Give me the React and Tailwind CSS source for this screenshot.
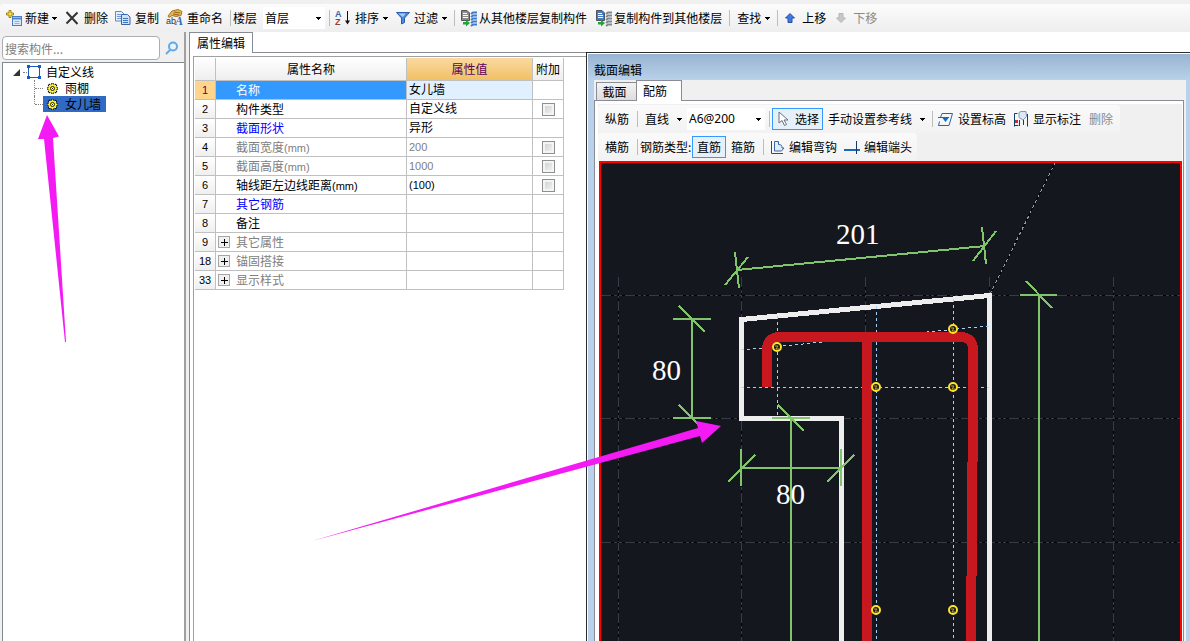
import { useState } from "react"

const properties = [
  { no: 1, name: "名称", value: "女儿墙" },
  { no: 2, name: "构件类型", value: "自定义线", check: true },
  { no: 3, name: "截面形状", value: "异形", tone: "blue" },
  { no: 4, name: "截面宽度", unit: "(mm)", value: "200", tone: "gray", check: true },
  { no: 5, name: "截面高度", unit: "(mm)", value: "1000", tone: "gray", check: true },
  { no: 6, name: "轴线距左边线距离", unit: "(mm)", value: "(100)", check: true },
  { no: 7, name: "其它钢筋", value: "", tone: "blue" },
  { no: 8, name: "备注", value: "" },
  { no: 9, name: "其它属性", value: "", tone: "gray", group: true },
  { no: 18, name: "锚固搭接", value: "", tone: "gray", group: true },
  { no: 33, name: "显示样式", value: "", tone: "gray", group: true },
]

const tones = {
  blue: "text-[#0000ff]",
  gray: "text-[#808080]",
}

const rebars = [
  [777, 347],
  [953, 329],
  [876, 387],
  [953, 387],
  [876, 610],
  [953, 610],
]

const Sep = ({ className = "" }) => <span className={`h-4 w-px shrink-0 bg-[#bdbdbd] ${className}`} />

const Caret = ({ className = "" }) => (
  <svg className={`h-[3px] w-[5px] shrink-0 ${className}`} viewBox="0 0 5 3" shapeRendering="crispEdges">
    <path d="M0 0h5v1H4v1H3v1H2V2H1V1H0z" fill="#000" />
  </svg>
)

const ToolButton = ({ children, className = "" }) => (
  <button type="button" className={`flex h-[22px] shrink-0 items-center whitespace-nowrap ${className}`}>
    {children}
  </button>
)

const NewIcon = () => (
  <svg className="h-4 w-4" viewBox="0 0 16 16">
    <rect x="6.5" y="6.5" width="9" height="9" fill="#dbeafa" stroke="#4c7dbd" />
    <path d="M7 8.5h8" stroke="#4a86d8" strokeWidth="2" />
    <path d="M8.5 11.5h5M8.5 13.5h5" stroke="#8fb2dd" />
    <path d="M3 .5h2v2.500h2.500v2H5v2.500H3V5H.5V3H3z" fill="#ffe14d" stroke="#a1820d" />
  </svg>
)

const CrossIcon = () => (
  <svg className="h-[14px] w-[14px]" viewBox="0 0 14 14">
    <path d="M1.500 1l11 12M12.500 1.500l-11 11" stroke="#333" strokeWidth="2" fill="none" />
  </svg>
)

const CopyIcon = () => (
  <svg className="h-4 w-4" viewBox="0 0 16 16">
    <path d="M.5 1.500h6l2.500 2.500v7H.5z" fill="#e6f0fc" stroke="#5d8ac4" />
    <path d="M2 4.500h4M2 6.500h4M2 8.500h4" stroke="#6e9bd3" />
    <path d="M6.500 4.500h6l2.500 2.500v7.500H6.500z" fill="#cfe1f8" stroke="#3767ab" />
    <path d="M8 8.500h5M8 10.500h5M8 12.500h5" stroke="#3f77bf" />
  </svg>
)

const RenameIcon = () => (
  <svg className="h-[18px] w-[18px] overflow-visible" viewBox="0 0 18 18">
    <path d="M2 7l4-5 6-1.500 4 2-1 4-5 1-4-1-3 2z" fill="#e9b64a" stroke="#a2752a" />
    <path d="M8 3l6 1M7 5l6 1" stroke="#8f6420" />
    <text x="0" y="15" fontSize="9" fontFamily="Liberation Sans" fill="#333">ab</text>
    <text x="9" y="16" fontSize="12" fontStyle="italic" fontWeight="bold" fontFamily="Liberation Serif" fill="#3467b8">A</text>
  </svg>
)

const SortIcon = () => (
  <svg className="h-4 w-4 overflow-visible" viewBox="0 0 16 16">
    <text x="0" y="7" fontSize="9" fontWeight="bold" fontFamily="Liberation Sans" fill="#3b64a8">A</text>
    <text x="0" y="15" fontSize="9" fontWeight="bold" fontFamily="Liberation Sans" fill="#94403c">Z</text>
    <path d="M12.500 1v11" stroke="#111" />
    <path d="M10 10.500h5l-2.500 4z" fill="#111" />
  </svg>
)

const FilterIcon = () => (
  <svg className="h-[14px] w-[14px]" viewBox="0 0 14 14">
    <path d="M.5 1.500h13L8.500 7v4.500L5.500 13V7z" fill="#4b8ae4" stroke="#2a5db0" />
    <path d="M2.500 2.500h7L7 6z" fill="#a9cdf8" />
  </svg>
)

const FloorCopyIcon = ({ page, stack }) => (
  <svg className="h-[17px] w-[17px]" viewBox="0 0 17 17">
    <path d="M1.500.5H7L9.500 3v7.500h-8z" fill={page} stroke="#555" />
    <path d="M3 3.500h4M3 5.500h5M3 7.500h5" stroke="#fff" />
    <path d="M11 4l2-1.500h4M11 7l2-1.500h4M11 10l2-1.500h4M11 13l2-1.500h4M11 16l2-1.500h4" stroke={stack} strokeWidth="2" fill="none" />
    <path d="M3 12h3v-2l4 3-4 3.500v-2H3z" fill="#22a43a" />
  </svg>
)

const ArrowIcon = ({ down, fill, stroke }) => (
  <svg className={`h-[10px] w-[10px] ${down ? "rotate-180" : ""}`} viewBox="0 0 10 10">
    <path d="M5 .5l4.500 4.500H7v4.500H3V5H.5z" fill={fill} stroke={stroke} />
  </svg>
)

const SearchIcon = () => (
  <svg className="h-[14px] w-[14px]" viewBox="0 0 14 14">
    <path d="M5 9l-4 4" stroke="#6ba6dd" strokeWidth="2" />
    <circle cx="8" cy="5.500" r="4" fill="#e8f5fd" stroke="#5fa9e6" strokeWidth="2" />
  </svg>
)

const LineIcon = () => (
  <svg className="h-[14px] w-[14px]" viewBox="0 0 14 14" shapeRendering="crispEdges">
    <rect x="1.500" y="1.500" width="11" height="11" fill="#fff" stroke="#1a58c4" />
    <path d="M0 0h3v3H0zM11 0h3v3h-3zM0 11h3v3H0zM11 11h3v3h-3z" fill="#1a58c4" />
  </svg>
)

const GearIcon = () => (
  <svg className="h-[13px] w-[13px]" viewBox="0 0 13 13">
    <path
      d="M6.500 1v11M1 6.500h11M2.500 2.500l8 8M10.500 2.500l-8 8"
      stroke="#1c1c00"
      strokeWidth="2.500"
    />
    <circle cx="6.500" cy="6.500" r="4" fill="#ffee22" />
    <path d="M6.500 1.500v10M1.500 6.500h10M3 3l7 7M10 3l-7 7" stroke="#ffee22" />
    <circle cx="6.500" cy="6.500" r="2" fill="#fff9a0" stroke="#222" />
    <path d="M6 6h1v1H6z" fill="#222" />
  </svg>
)

const PlusBox = () => (
  <svg className="h-3 w-3" viewBox="0 0 12 12" shapeRendering="crispEdges">
    <rect x=".5" y=".5" width="11" height="11" fill="#f0f0f0" stroke="#a6a6a6" />
    <path d="M3 6.500h7M6.500 3v7" stroke="#000" />
  </svg>
)

const PointerIcon = () => (
  <svg className="h-4 w-[11px]" viewBox="0 0 11 16">
    <path d="M1 1v11l3-2.500 2.500 5 2-1-2.500-4.500h4z" fill="#fff" stroke="#6b6f78" />
  </svg>
)

const ElevationIcon = () => (
  <svg className="h-[15px] w-[15px]" viewBox="0 0 15 15">
    <path d="M2.500 5.500l1.500-4h10.500l-3.500 12H.5l1-4" fill="none" stroke="#1769c0" />
    <path d="M0 5.500h11" stroke="#1769c0" />
    <path d="M4.500 6h6l-3 4z" fill="#1769c0" />
  </svg>
)

const MarkIcon = () => (
  <svg className="h-4 w-[14px]" viewBox="0 0 14 16">
    <path d="M.5 15.500V2.500h3M13.500 3v12.500M.5 14.500h4M5.500 15V9M9.500 14V8" fill="none" stroke="#123d73" />
    <path d="M5 1.500L7 .5h5l.5 5-3.500 3.500L5 6.500z" fill="#dce8f6" stroke="#8199b8" />
    <rect x="1" y="9" width="3" height="3" fill="#d82e1f" />
  </svg>
)

const HookIcon = () => (
  <svg className="h-[15px] w-[15px]" viewBox="0 0 15 15">
    <path d="M1.500 1v12.500H13" fill="none" stroke="#1e4f96" />
    <path d="M4.500 1.500h4v3c3 0 3.500 1 3.500 3.500h2l-2.500 3h-7z" fill="#e2ecf8" stroke="#3a66a6" />
  </svg>
)

const EndIcon = () => (
  <svg className="h-[15px] w-4" viewBox="0 0 16 15">
    <path d="M0 10h16" stroke="#1769c0" strokeWidth="2" />
    <path d="M12.500 1v13" stroke="#17386b" />
  </svg>
)

const MainToolbar = () => (
  <header className="h-8 shrink-0 bg-[#f0f0f0] pt-1">
    <div className="flex h-7 items-center rounded-l bg-gradient-to-b from-[#fcfcfc] to-[#eeeeee] pl-1.5">
      <ToolButton className="gap-[3px]">
        <NewIcon />
        新建
        <Caret />
      </ToolButton>
      <ToolButton className="ml-2 gap-[5px]">
        <CrossIcon />
        删除
      </ToolButton>
      <ToolButton className="ml-[7px] gap-1">
        <CopyIcon />
        复制
      </ToolButton>
      <ToolButton className="ml-[7px] gap-[3px]">
        <RenameIcon />
        重命名
      </ToolButton>
      <Sep className="ml-[7px]" />
      <label className="ml-[2px] flex shrink-0 items-center gap-[6px]">
        楼层
        <span className="relative flex h-[22px] w-[62px] items-center bg-white">
          <select className="h-full w-full appearance-none bg-transparent pl-[2px] outline-none">
            <option>首层</option>
          </select>
          <Caret className="pointer-events-none absolute right-1" />
        </span>
      </label>
      <Sep className="ml-1" />
      <ToolButton className="ml-[5px] gap-1">
        <SortIcon />
        排序
        <Caret />
      </ToolButton>
      <ToolButton className="ml-2 gap-1">
        <FilterIcon />
        过滤
        <Caret />
      </ToolButton>
      <Sep className="ml-[7px]" />
      <ToolButton className="ml-[5px] gap-[2px]">
        <FloorCopyIcon page="#8b8b8b" stack="#3d7cc9" />
        从其他楼层复制构件
      </ToolButton>
      <ToolButton className="ml-2 gap-[2px]">
        <FloorCopyIcon page="#4379c9" stack="#7d8792" />
        复制构件到其他楼层
      </ToolButton>
      <Sep className="ml-[7px]" />
      <ToolButton className="ml-[7px] gap-1">
        查找
        <Caret />
      </ToolButton>
      <Sep className="ml-[7px]" />
      <ToolButton className="ml-[7px] gap-[7px]">
        <ArrowIcon fill="#3c7be0" stroke="#2450a8" />
        上移
      </ToolButton>
      <ToolButton className="ml-[10px] gap-[7px] text-[#8a8a8a]">
        <ArrowIcon down fill="#c8c8c8" stroke="#b4b4b4" />
        下移
      </ToolButton>
    </div>
  </header>
)

const ComponentTree = () => (
  <aside className="flex w-[186px] shrink-0 flex-col border-r-2 border-[#a0a0a0] bg-[#f0f0f0] pl-[2px] pt-1">
    <div className="flex h-[26px] shrink-0 items-center gap-[5px] pb-[2px]">
      <input
        type="text"
        aria-label="搜索构件"
        placeholder="搜索构件..."
        className="h-6 w-[158px] rounded-sm border border-[#abadb3] bg-white px-[2px] outline-none placeholder:text-[#808080]"
      />
      <button type="button" aria-label="搜索">
        <SearchIcon />
      </button>
    </div>
    <ul className="flex-1 border-l border-t border-[#828790] bg-white pt-px">
      <li>
        <div className="flex h-4 items-center pl-[10px]">
          <svg className="h-[7px] w-[7px]" viewBox="0 0 7 7">
            <path d="M7 0v7H0z" fill="#333" />
          </svg>
          <span className="ml-[3px] w-1 border-t border-dotted border-[#808080]" />
          <LineIcon />
          <span className="ml-[5px]">自定义线</span>
        </div>
        <ul className="ml-[31px]">
          <li className="flex h-4">
            <span className="h-4 w-px border-l border-dotted border-[#808080]" />
            <span className="mt-2 h-px w-2 border-t border-dotted border-[#808080]" />
            <span className="flex items-center gap-[6px] pl-[3px]">
              <GearIcon />
              雨棚
            </span>
          </li>
          <li className="flex h-4">
            <span className="h-2 w-px border-l border-dotted border-[#808080]" />
            <span className="mt-2 h-px w-2 border-t border-dotted border-[#808080]" />
            <span className="flex items-center gap-[6px] bg-[#316ac5] pl-[3px] pr-[5px]">
              <GearIcon />
              女儿墙
            </span>
          </li>
        </ul>
      </li>
    </ul>
  </aside>
)

const PropertyTable = () => {
  const [checked, setChecked] = useState({})

  const toggle = (no) => setChecked({ ...checked, [no]: !checked[no] })

  return (
    <table className="w-[369px] table-fixed border-separate border-spacing-0 bg-white">
      <thead>
        <tr className="h-[23px]">
          <th className="w-[21px] border-b border-r border-[#c0c0c0] bg-gradient-to-b from-white to-[#eeeeee] p-0" />
          <th className="w-[191px] border-b border-r border-[#c0c0c0] bg-gradient-to-b from-white to-[#eeeeee] p-0 font-normal">属性名称</th>
          <th className="w-[126px] border-b border-r border-[#c0c0c0] bg-gradient-to-b from-[#fad9a0] to-[#f1c063] p-0 font-normal text-[#5b0059]">属性值</th>
          <th className="w-[31px] border-b border-r border-[#c0c0c0] bg-gradient-to-b from-white to-[#eeeeee] p-0 font-normal">附加</th>
        </tr>
      </thead>
      <tbody>
        {properties.map((row) => {
          const active = row.no === 1
          const tone = tones[row.tone] || "text-black"
          return (
            <tr key={row.no} className="h-[19px]">
              <th
                className={`border-b border-r border-[#c0c0c0] p-0 font-['Liberation_Sans'] text-[11px] font-normal leading-4 ${
                  active ? "bg-[#ffd58c] text-[#5b0059]" : "bg-gradient-to-b from-white to-[#efefef]"
                }`}
              >
                {row.no}
              </th>
              <td className={`border-b border-r border-[#c0c0c0] p-0 ${active ? "bg-[#3399ff] text-white" : tone}`}>
                <div className="flex items-center pl-[2px]">
                  <span className="w-[18px]">{row.group && <PlusBox />}</span>
                  <span>
                    {row.name}
                    {row.unit && <span className="font-['Liberation_Sans'] text-[11px]">{row.unit}</span>}
                  </span>
                </div>
              </td>
              <td
                className={`border-b border-r border-[#c0c0c0] py-0 pl-[2px] pr-0 font-['Liberation_Sans','Noto_Sans_CJK_SC',sans-serif] ${
                  active ? "bg-[#e1f0ff]" : ""
                } ${row.tone === "gray" ? "text-[#808080]" : ""} ${/\d/.test(row.value) ? "text-[11px]" : ""}`}
              >
                {row.value}
              </td>
              <td className="border-b border-r border-[#c0c0c0] p-0">
                {row.check && (
                  <input
                    type="checkbox"
                    aria-label={row.name}
                    checked={!!checked[row.no]}
                    onChange={() => toggle(row.no)}
                    className="mx-auto block h-[13px] w-[13px] appearance-none border border-[#8e8f8f] bg-gradient-to-br from-[#c9ced3] to-[#f6f6f6] shadow-[inset_0_0_0_2px_#f4f4f4] checked:bg-[#3399ff]"
                  />
                )}
              </td>
            </tr>
          )
        })}
      </tbody>
    </table>
  )
}

const PropertyPanel = () => (
  <section className="flex w-[397px] shrink-0 flex-col">
    <div className="flex h-[21px] shrink-0">
      <button type="button" className="w-16 border-l border-r border-t border-[#898c95] bg-white pb-px">
        属性编辑
      </button>
      <span className="flex-1 border-b border-[#898c95]" />
    </div>
    <div className="flex-1 border-l border-[#898c95] pl-[3px] pt-[3px]">
      <div className="h-full border-l border-t border-[#a0a0a0] pl-px pt-px">
        <PropertyTable />
      </div>
    </div>
  </section>
)

// Section drawing, plotted in window coordinates
const SectionCanvas = () => (
  <svg className="block h-full w-full" shapeRendering="crispEdges">
    <g transform="translate(-601 -163)" fill="none">
      {[618.5, 741.5, 865.5, 989.5, 1113.5].map((x) => (
        <g key={x}>
          <path d={`M${x} 277V1200`} stroke="#000" />
          <path d={`M${x} 277V1200`} stroke="#363b45" strokeDasharray="10 3 3 2 3 3" />
        </g>
      ))}
      {[295.5, 418.5, 542.5].map((y) => (
        <g key={y}>
          <path d={`M601 ${y}H2400`} stroke="#000" />
          <path d={`M601 ${y}H2400`} stroke="#363b45" strokeDasharray="10 3 3 2 3 3" />
        </g>
      ))}
      <path d="M990 294L1055 163" stroke="#000" />
      <path d="M990 294L1055 163" stroke="#9a9a9a" strokeDasharray="3 3" />

      <path d="M841.500 1200V418.500H741.500V319.500L989.500 295.500V1200" stroke="#eeeeee" strokeWidth="5" />

      <g stroke="#a9d0f5" strokeDasharray="3 3">
        <path d="M777.500 316V418" />
        <path d="M876.500 306V1200" />
        <path d="M953.500 299V1200" />
        <path d="M741 387.500H989" />
        <path d="M741 350L989 326" />
      </g>

      <g stroke="#c8181f" strokeWidth="10">
        <path d="M767 387V350Q767 337 780 337H960Q973 337 973 350V462" />
        <path d="M972 462V576" />
        <path d="M971 576V1200" />
        <path d="M867 340V1200" />
      </g>

      {rebars.map(([x, y]) => (
        <g key={`${x}-${y}`} shapeRendering="auto">
          <circle cx={x} cy={y} r="4" fill="#14171e" stroke="#ffe426" strokeWidth="2" />
          <path d={`M${x - 2} ${y - 1}h3M${x + 1} ${y - 1}l-2 3h3`} stroke="#b9a936" />
        </g>
      ))}

      <g stroke="#82c46c" strokeWidth="2">
        <path d="M737 270L985 246M735 252L739 288M725 285L748 257M982 227L986 264M973 261L996 231" />
        <path d="M692 319V418M673 319H711M679 306L705 332M673 418H711M679 405L705 431" />
        <path d="M791 418V1200M772 418H810M778 405L804 431" />
        <path d="M741 468H841M741 449V486M728 482L755 455M841 449V486M827 482L854 455" />
        <path d="M1039 295V1200M1020 295H1057M1026 281L1052 308" />
      </g>

      <g fill="#fff" fontSize="29" fontFamily="Liberation Serif, serif">
        <text x="836" y="244">201</text>
        <text x="652" y="380">80</text>
        <text x="776" y="504">80</text>
      </g>
    </g>
  </svg>
)

const SectionEditor = () => {
  const [mode, setMode] = useState("直筋")

  return (
    <section className="mt-5 flex min-w-0 flex-1 flex-col border-l border-t border-[#2b2b2b] bg-white pl-px pt-px">
      <div className="flex flex-1 flex-col bg-[#b9d1ea] pl-[6px] pr-1">
        <h2 className="-ml-[6px] -mr-1 flex h-[26px] shrink-0 items-center bg-gradient-to-b from-[#99b4d1] to-[#b9d1ea] pl-[6px] pt-[6px]">
          截面编辑
        </h2>
        <div className="flex min-h-0 flex-1 flex-col bg-[#f0f0f0] pr-[2px]">
          <div className="flex h-[21px] shrink-0">
            <span className="w-[2px] border-b border-[#898c95]" />
            <button type="button" className="mt-[2px] w-10 border border-r-0 border-[#898c95] bg-gradient-to-b from-[#f3f3f3] to-[#dddddd] pr-1">
              截面
            </button>
            <button type="button" className="w-[46px] border-l border-r border-t border-[#898c95] bg-white pb-px pr-2">
              配筋
            </button>
            <span className="flex-1 border-b border-[#898c95]" />
          </div>
          <div className="flex min-h-0 flex-1 flex-col border-l border-r border-[#898c95] bg-white pl-[3px] pr-px pt-[3px]">
            <div className="shrink-0 bg-[#f0f0f0] pt-px">
              <div className="flex h-7 w-[522px] items-center rounded bg-gradient-to-b from-[#fafafa] to-[#f2f2f2] pl-[7px]">
                <ToolButton>纵筋</ToolButton>
                <Sep className="ml-2" />
                <ToolButton className="ml-[7px] gap-2">
                  直线
                  <Caret />
                </ToolButton>
                <span className="relative ml-[5px] flex h-[22px] w-[78px] items-center bg-white">
                  <select
                    aria-label="钢筋规格"
                    className="h-full w-full appearance-none bg-transparent pl-[2px] font-['Noto_Sans'] outline-none"
                  >
                    <option>A6@200</option>
                  </select>
                  <Caret className="pointer-events-none absolute right-1" />
                </span>
                <Sep className="ml-1" />
                <ToolButton className="ml-[2px] gap-[6px] border border-[#3399ff] bg-[#e5f0fa] pl-[5px] pr-[3px]">
                  <PointerIcon />
                  选择
                </ToolButton>
                <ToolButton className="ml-[5px] gap-2">
                  手动设置参考线
                  <Caret />
                </ToolButton>
                <Sep className="ml-[7px]" />
                <ToolButton className="ml-[5px] gap-[5px]">
                  <ElevationIcon />
                  设置标高
                </ToolButton>
                <ToolButton className="ml-2 gap-[5px]">
                  <MarkIcon />
                  显示标注
                </ToolButton>
                <ToolButton className="ml-2 text-[#8a8a8a]">删除</ToolButton>
              </div>
              <div className="flex h-7 w-[319px] items-center rounded bg-gradient-to-b from-[#fafafa] to-[#f2f2f2] pl-[7px]">
                <ToolButton>横筋</ToolButton>
                <Sep className="ml-2" />
                <span className="ml-[2px] w-[52px] whitespace-nowrap">钢筋类型:</span>
                {["直筋", "箍筋"].map((label) => (
                  <button
                    key={label}
                    type="button"
                    onClick={() => setMode(label)}
                    className={`h-[22px] w-[34px] border ${
                      mode === label ? "border-[#3399ff] bg-[#e5f0fa]" : "border-transparent"
                    }`}
                  >
                    {label}
                  </button>
                ))}
                <Sep className="ml-[3px]" />
                <ToolButton className="ml-[6px] gap-1">
                  <HookIcon />
                  编辑弯钩
                </ToolButton>
                <ToolButton className="ml-[7px] gap-1">
                  <EndIcon />
                  编辑端头
                </ToolButton>
              </div>
            </div>
            <div className="ml-px min-h-0 flex-1 overflow-hidden border-2 border-b-0 border-[#ff0000] bg-[#14171e]">
              <SectionCanvas />
            </div>
          </div>
        </div>
      </div>
    </section>
  )
}

const App = () => (
  <div className="relative flex h-screen flex-col overflow-hidden bg-white font-['Noto_Sans_CJK_SC',sans-serif] text-[12px] leading-4 text-black">
    <MainToolbar />
    <main className="flex min-h-0 flex-1">
      <ComponentTree />
      <div className="w-[3px] shrink-0 bg-[#f0f0f0]" />
      <PropertyPanel />
      <SectionEditor />
    </main>
    <svg className="pointer-events-none absolute inset-0 h-full w-full" fill="#f41af4">
      <path d="M47 115L59 136.500L53 138L66 342H65L44 139H38z" />
      <path d="M721 426L702 443L700 436L312 541L698 428L696 421z" />
    </svg>
  </div>
)

export default App
